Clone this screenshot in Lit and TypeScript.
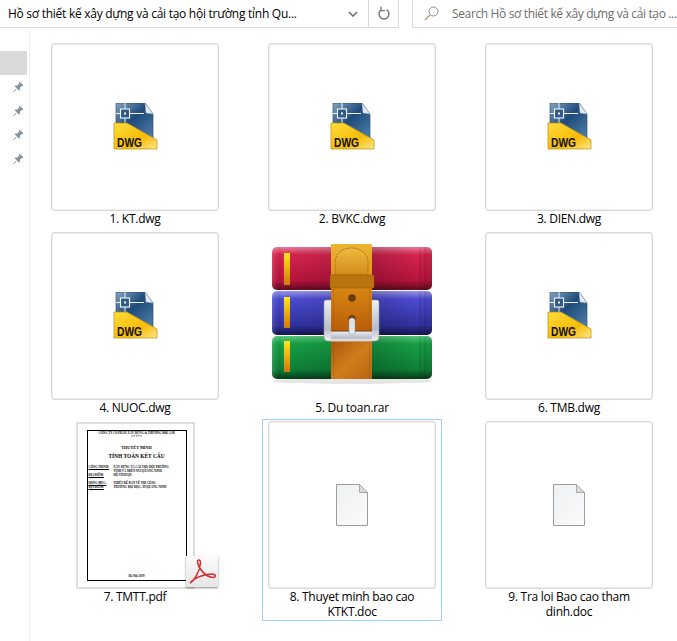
import { LitElement, html, svg, css, nothing } from 'lit';
import { customElement } from 'lit/decorators.js';

type Kind = 'dwg' | 'rar' | 'pdf' | 'blank';

const FILES: { name: string; kind: Kind; selected?: boolean }[] = [
  { name: '1. KT.dwg', kind: 'dwg' },
  { name: '2. BVKC.dwg', kind: 'dwg' },
  { name: '3. DIEN.dwg', kind: 'dwg' },
  { name: '4. NUOC.dwg', kind: 'dwg' },
  { name: '5. Du toan.rar', kind: 'rar' },
  { name: '6. TMB.dwg', kind: 'dwg' },
  { name: '7. TMTT.pdf', kind: 'pdf' },
  { name: '8. Thuyet minh bao cao KTKT.doc', kind: 'blank', selected: true },
  { name: '9. Tra loi Bao cao tham dinh.doc', kind: 'blank' },
];

const dwgIcon = () => html`
  <svg width="48" height="48" viewBox="0 0 48 48">
    <defs>
      <linearGradient id="dwg-blue" x1="0" y1="0" x2="1" y2="1">
        <stop offset="0" stop-color="#86a5c2" />
        <stop offset=".45" stop-color="#1f4a7a" />
        <stop offset="1" stop-color="#4f83ad" />
      </linearGradient>
      <linearGradient id="dwg-yellow" x1="0" y1="0" x2="1" y2="1">
        <stop offset="0" stop-color="#ffdc3c" />
        <stop offset=".62" stop-color="#f6bb06" />
        <stop offset="1" stop-color="#ffe889" />
      </linearGradient>
    </defs>
    <path d="M5 0H34L42 11V36H5Z" fill="url(#dwg-blue)" stroke="#1e3f66" stroke-width=".6" />
    <path d="M34 0L42 11L35 10Z" fill="#e4ebf1" stroke="#8da3b8" stroke-width=".5" />
    <path d="M14 0V20M5 10.5H33" stroke="#eaf2f8" stroke-width="1" />
    <rect x="9.5" y="6" width="9" height="9" fill="#2d5a88" stroke="#f4f8fb" stroke-width="1.1" />
    <rect x="13" y="9.5" width="2" height="2" fill="#fff" />
    <path d="M3 20H16L46 37V46H3Z" fill="url(#dwg-yellow)" stroke="#b98c08" stroke-width=".7" />
    <text x="6" y="44" class="dwg-text" textLength="25" lengthAdjust="spacingAndGlyphs">DWG</text>
  </svg>
`;

const book = (y: number, h: number, id: string, tagY: number, tagH: number) => svg`
  <rect x="4" y=${y} width="160" height=${h} rx="5" fill="url(#${id})" />
  <rect x="4" y=${y} width="160" height=${h} rx="5" fill="url(#rar-side)" />
  <path d="M12 ${y + 1}V${y + h - 1}M152 ${y + 1}V${y + h - 1}M157 ${y + 1}V${y + h - 1}"
    stroke="#000" stroke-opacity=".14" stroke-width="1" />
  <rect x="16" y=${tagY} width="6" height=${tagH} fill="url(#rar-tag)" />
`;

const stops = (a: string, b: string, c: string, d: string) => svg`
  <stop offset="0" stop-color=${a} />
  <stop offset=".18" stop-color=${b} />
  <stop offset=".78" stop-color=${c} />
  <stop offset="1" stop-color=${d} />
`;

const rarIcon = () => html`
  <svg class="rar" width="168" height="168" viewBox="0 0 168 168">
    <defs>
      <linearGradient id="rar-red" x1="0" y1="0" x2="0" y2="1">${stops('#ec7d9a', '#d9254f', '#b9143c', '#5e0a20')}</linearGradient>
      <linearGradient id="rar-blue" x1="0" y1="0" x2="0" y2="1">${stops('#9a9aec', '#4d4dd6', '#3232a2', '#15154e')}</linearGradient>
      <linearGradient id="rar-green" x1="0" y1="0" x2="0" y2="1">${stops('#5cc87c', '#17a346', '#0f8038', '#063c1a')}</linearGradient>
      <linearGradient id="rar-side" x1="0" y1="0" x2="1" y2="0">
        <stop offset="0" stop-color="#fff" stop-opacity=".16" />
        <stop offset=".05" stop-color="#000" stop-opacity="0" />
        <stop offset=".62" stop-color="#000" stop-opacity=".2" />
        <stop offset=".9" stop-color="#000" stop-opacity=".02" />
        <stop offset="1" stop-color="#000" stop-opacity=".1" />
      </linearGradient>
      <linearGradient id="rar-tag" x1="0" y1="0" x2="0" y2="1">
        <stop offset="0" stop-color="#ffe81e" />
        <stop offset="1" stop-color="#d0780f" />
      </linearGradient>
      <linearGradient id="rar-belt" x1="0" y1="0" x2="0" y2="1">
        <stop offset="0" stop-color="#edb531" />
        <stop offset=".3" stop-color="#d98a14" />
        <stop offset=".62" stop-color="#bb6109" />
        <stop offset="1" stop-color="#c2690e" />
      </linearGradient>
      <linearGradient id="rar-belt-low" x1="0" y1="0" x2="1" y2="1">
        <stop offset="0" stop-color="#a9570c" />
        <stop offset=".5" stop-color="#cf7e1c" />
        <stop offset="1" stop-color="#b8640f" />
      </linearGradient>
      <linearGradient id="rar-flap" x1="0" y1="0" x2="0" y2="1">
        <stop offset="0" stop-color="#eeba3e" />
        <stop offset="1" stop-color="#d28a18" />
      </linearGradient>
      <linearGradient id="rar-steel" x1="0" y1="0" x2="0" y2="1">
        <stop offset="0" stop-color="#eef0f4" />
        <stop offset=".7" stop-color="#b6bcc8" />
        <stop offset="1" stop-color="#f6f3f2" />
      </linearGradient>
    </defs>
    <ellipse cx="84" cy="149" rx="80" ry="3" fill="#000" opacity=".1" />
    ${book(15, 43, 'rar-red', 21, 32)}
    ${book(59, 44, 'rar-blue', 65, 31)}
    ${book(104, 43, 'rar-green', 109, 31)}
    <path d="M58 68H109Q111 68 111 70V105Q111 109 107 109H60Q56 109 56 105V70Q56 68 58 68Z" fill="url(#rar-steel)" stroke="#8d93a0" stroke-width=".6" />
    <rect x="63" y="12" width="41" height="135" rx="1" fill="url(#rar-belt)" />
    <path d="M63 99H104V109H63Z" fill="url(#rar-steel)" />
    <path d="M63 99H104" stroke="#6f3a06" stroke-width="1.2" />
    <path d="M63 109H104" stroke="#d8c8c0" stroke-width="1" />
    <path d="M63 110H104V147H63Z" fill="url(#rar-belt-low)" />
    <path d="M65.5 110V146M101.5 110V146M65.5 57V98M101.5 57V98" stroke="#7d4306" stroke-opacity=".55" stroke-width=".7" stroke-dasharray="1.5 1" />
    <path d="M67 43V31C67 11 100 11 100 31V43Z" fill="url(#rar-flap)" stroke="#a96a12" stroke-width="1" stroke-dasharray="1.5 1" />
    <rect x="62" y="43" width="44" height="13" fill="#b9740f" stroke="#8e540a" stroke-width=".5" />
    <circle cx="84" cy="66" r="3.8" fill="#6e3a08" />
    <circle cx="84" cy="87" r="3.8" fill="#6e3a08" />
    <rect x="81" y="86" width="6" height="17" rx="2.5" fill="#dfe3ea" stroke="#8d93a0" stroke-width=".5" />
  </svg>
`;

const blankIcon = () => html`
  <svg width="32" height="42" viewBox="0 0 32 42">
    <defs>
      <linearGradient id="blank-page" x1="0" y1="0" x2="1" y2="1">
        <stop offset="0" stop-color="#eef0f2" />
        <stop offset="1" stop-color="#fbfbfc" />
      </linearGradient>
    </defs>
    <path d="M.5 .5H23.5L31.5 8.5V41.5H.5Z" fill="url(#blank-page)" stroke="#9c9c9c" />
    <path d="M23.5 .5V8.5H31.5Z" fill="#dcdcdc" stroke="#a8a8a8" />
  </svg>
`;

const pdfBadge = () => html`
  <div class="pdf-badge">
    <svg width="32" height="31" viewBox="0 0 32 31">
      <path d="M4.5 26.5C8 25 14 15 14.5 7C14.5 3 11 3 11.5 6.5C12.5 12 19 21 27 21.5C30.5 21.5 30 18 26 18C20 18 10 21 6 25C4 27 4 28 4.5 26.5Z"
        fill="none" stroke="#d52b2f" stroke-width="1.5" />
    </svg>
  </div>
`;

const pinIcon = () => html`
  <svg width="11" height="12" viewBox="0 0 11 12">
    <path d="M6.5 .5L10.5 4.5L9.5 5.3L8.8 4.9L6.8 6.8L6.9 9L5.9 9.6L1.6 5.3L2.2 4.4L4.4 4.5L6.3 2.6L5.9 1.5Z" fill="#87929c" />
    <path d="M3.4 7.8L.5 11" stroke="#87929c" stroke-width="1" />
  </svg>
`;

@customElement('app-root')
export class AppRoot extends LitElement {
  static styles = css`
    :host {
      display: block;
      height: 641px;
      overflow: hidden;
      background: #fff;
      font-family: 'Open Sans', 'Noto Sans', sans-serif;
      font-size: 12px;
      letter-spacing: -0.27px;
      color: #000;
    }

    /* ===== Address + search bar ===== */
    .topbar {
      display: flex;
      height: 28px;
    }

    .address {
      display: flex;
      align-items: center;
      width: 399px;
      box-sizing: border-box;
      border-bottom: 1px solid #d9d9d9;
      border-right: 1px solid #d9d9d9;
    }

    .path {
      flex: 1;
      padding-left: 8px;
      white-space: nowrap;
    }

    .chevron {
      width: 30px;
      display: flex;
      justify-content: center;
    }

    .refresh {
      width: 29px;
      height: 100%;
      display: flex;
      align-items: center;
      justify-content: center;
      border-left: 1px solid #d9d9d9;
    }

    .search {
      flex: 1;
      min-width: 0;
      margin-left: 13px;
      display: flex;
      align-items: center;
      gap: 13px;
      padding-left: 11px;
      border-left: 1px solid #d9d9d9;
      border-bottom: 1px solid #d9d9d9;
      color: #6d6d6d;
      letter-spacing: -0.36px;
      white-space: nowrap;
    }

    .search svg {
      flex: none;
    }

    /* ===== Body ===== */
    .body {
      display: flex;
    }

    .nav {
      width: 30px;
      height: 613px;
      box-sizing: border-box;
      flex: none;
      padding-top: 23px;
      border-right: 1px solid #f0f0f0;
      margin-right: 15px;
    }

    .nav-item {
      width: 27px;
      height: 24px;
      display: flex;
      align-items: center;
      justify-content: flex-end;
      padding-right: 3px;
      box-sizing: border-box;
    }

    .nav-item--active {
      background: #d9d9d9;
    }

    .grid {
      display: grid;
      grid-template-columns: repeat(3, 180px);
      grid-auto-rows: 189px;
      column-gap: 37px;
      padding-top: 13px;
    }

    /* ===== File item ===== */
    .item {
      align-self: start;
      box-sizing: border-box;
      width: 180px;
      padding: 1px 5px;
      border: 1px solid transparent;
    }

    .item--selected {
      border-color: #99d1ff;
    }

    .tile {
      position: relative;
      width: 168px;
      height: 168px;
      display: flex;
      align-items: center;
      justify-content: center;
      box-sizing: border-box;
    }

    .tile--framed {
      border: 1px solid #d8d8d8;
      border-radius: 3px;
      box-shadow: inset 0 0 0 1px #efefef;
    }

    .label {
      width: 168px;
      text-align: center;
      line-height: 15px;
    }

    .dwg-text {
      font-family: 'Liberation Sans', sans-serif;
      font-weight: 700;
      font-size: 12px;
      letter-spacing: 0;
      fill: #111;
    }

    .rar {
      overflow: visible;
    }

    /* ===== PDF preview ===== */
    .sheet {
      width: 119px;
      height: 167px;
      box-sizing: border-box;
      border: 2px solid #dedede;
      background: #fff;
      padding: 6px 6px 6px 9px;
    }

    .sheet-frame {
      height: 100%;
      box-sizing: border-box;
      border: 1.5px solid #000;
      display: flex;
      flex-direction: column;
      align-items: stretch;
      font-family: 'Liberation Serif', serif;
      font-weight: 700;
      font-size: 3px;
      line-height: 4px;
      letter-spacing: 0;
      color: #000;
      white-space: nowrap;
    }

    .sheet-center {
      text-align: center;
    }

    .sheet-title {
      margin-top: 6px;
      font-size: 4.2px;
      line-height: 6px;
    }

    .sheet-heading {
      margin-top: 1px;
      margin-bottom: 5px;
      font-size: 5.4px;
      line-height: 8px;
    }

    .sheet-row {
      display: grid;
      grid-template-columns: 25px 1fr;
      padding-left: 1px;
    }

    .sheet-gap {
      margin-top: 4px;
    }

    .sheet-foot {
      margin-top: auto;
      margin-bottom: 2px;
    }

    .pdf-badge {
      position: absolute;
      left: 135px;
      top: 135px;
      width: 32px;
      height: 31px;
      background: linear-gradient(#fbfbfb, #e6e6e6);
      box-shadow: 0 1px 2px rgba(0, 0, 0, 0.45);
    }
  `;

  private _renderSheet() {
    return html`
      <div class="sheet">
        <div class="sheet-frame">
          <div class="sheet-center">CÔNG TY CỔ PHẦN XÂY DỰNG &amp; THƯƠNG MẠI A.M</div>
          <div class="sheet-center">* * * * *</div>
          <div class="sheet-center sheet-title">THUYẾT MINH</div>
          <div class="sheet-center sheet-heading">TÍNH TOÁN KẾT CẤU</div>
          <div class="sheet-row"><u>CÔNG TRÌNH:</u><span>XÂY DỰNG VÀ CẢI TẠO HỘI TRƯỜNG</span></div>
          <div class="sheet-row"><span></span><span>TỈNH VÀ MIỀN NÚI QUẢNG NINH</span></div>
          <div class="sheet-row"><u>ĐỊA ĐIỂM:</u><span>HỒ TỈNH QN</span></div>
          <div class="sheet-row sheet-gap"><u>HẠNG MỤC:</u><span>THIẾT KẾ BẢN VẼ THI CÔNG</span></div>
          <div class="sheet-row"><u>ĐỊA ĐIỂM:</u><span>TRƯỜNG ĐẠI HỌC, TP.QUẢNG NINH</span></div>
          <div class="sheet-center sheet-foot">Hà Nội 2019</div>
        </div>
      </div>
    `;
  }

  private _renderThumb(kind: Kind) {
    switch (kind) {
      case 'dwg':
        return html`<div class="tile tile--framed">${dwgIcon()}</div>`;
      case 'blank':
        return html`<div class="tile tile--framed">${blankIcon()}</div>`;
      case 'rar':
        return html`<div class="tile">${rarIcon()}</div>`;
      case 'pdf':
        return html`<div class="tile">${this._renderSheet()}${pdfBadge()}</div>`;
      default:
        return nothing;
    }
  }

  render() {
    return html`
      <div class="topbar">
        <div class="address">
          <div class="path">Hồ sơ thiết kế xây dựng và cải tạo hội trường tỉnh Qu...</div>
          <div class="chevron">
            <svg width="10" height="6" viewBox="0 0 10 6">
              <path d="M1 1L5 5L9 1" fill="none" stroke="#6f6f6f" stroke-width="1.6" />
            </svg>
          </div>
          <div class="refresh">
            <svg width="14" height="15" viewBox="0 0 14 15">
              <path d="M4.5 3.6A5 5 0 1 0 9.5 3.6" fill="none" stroke="#7a7a7a" stroke-width="1.5" />
              <path d="M4 .5V4.6H8" fill="none" stroke="#7a7a7a" stroke-width="1.3" />
            </svg>
          </div>
        </div>
        <div class="search">
          <svg width="15" height="15" viewBox="0 0 15 15">
            <circle cx="9.5" cy="5.5" r="4.5" fill="none" stroke="#8c8c8c" />
            <path d="M6 9L1 14" stroke="#b89a7a" stroke-width="1.4" />
          </svg>
          <span>Search Hồ sơ thiết kế xây dựng và cải tạo ...</span>
        </div>
      </div>
      <div class="body">
        <div class="nav">
          <div class="nav-item nav-item--active"></div>
          ${[0, 1, 2, 3].map(() => html`<div class="nav-item">${pinIcon()}</div>`)}
        </div>
        <div class="grid">
          ${FILES.map(
            (f) => html`
              <div class="item ${f.selected ? 'item--selected' : ''}">
                ${this._renderThumb(f.kind)}
                <div class="label">${f.name}</div>
              </div>
            `
          )}
        </div>
      </div>
    `;
  }
}

declare global {
  interface HTMLElementTagNameMap {
    'app-root': AppRoot;
  }
}
